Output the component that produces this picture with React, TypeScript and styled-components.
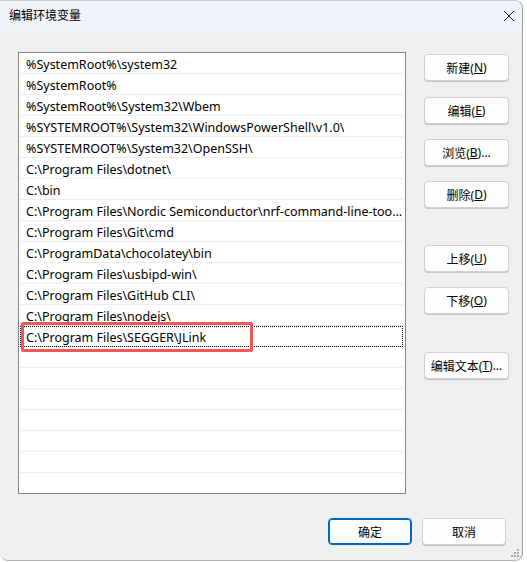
import React from "react";
import styled, { createGlobalStyle } from "styled-components";

const GlobalStyle = createGlobalStyle`
  html, body {
    margin: 0;
    padding: 0;
    background: #ffffff;
  }
  * {
    box-sizing: border-box;
  }
`;

const FONT = `"Noto Sans", "Noto Sans CJK SC", sans-serif`;

const Window = styled.div`
  position: relative;
  width: 523px;
  height: 561px;
  display: flex;
  flex-direction: column;
  background: #efefef;
  border-right: 1px solid #9c9c9c;
  border-bottom: 1px solid #b4b4b4;
  border-top: 1px solid #c8c8c8;
  border-radius: 0 8px 8px 8px;
  overflow: hidden;
  font-family: ${FONT};
  font-size: 12px;
  color: #000;
`;

const TitleBar = styled.div`
  height: 30px;
  flex: none;
  display: flex;
  align-items: center;
  justify-content: space-between;
  padding: 0 1px 0 9px;
  background: #eef2f9;
`;

const Title = styled.span`
  font-size: 12px;
  line-height: 1;
`;

const CloseButton = styled.div`
  width: 24px;
  height: 24px;
  display: flex;
  align-items: center;
  justify-content: center;
`;

const Body = styled.div`
  flex: 1;
  display: flex;
  flex-direction: column;
  padding: 21px 13px 15px 18px;
`;

const Main = styled.div`
  display: flex;
  gap: 18px;
`;

const ListBox = styled.div`
  position: relative;
  width: 390px;
  height: 442px;
  background: #ffffff;
  border: 1px solid #868686;
  padding: 0 2px 0 1px;
  overflow: hidden;
`;

const Row = styled.div<{ $focused?: boolean }>`
  height: 21px;
  display: flex;
  align-items: center;
  padding: 2px 0 0 6px;
  border-bottom: 1px solid #ededed;
  white-space: nowrap;
  overflow: hidden;
  font-size: 12.5px;
  line-height: 19px;
  outline: ${(p) => (p.$focused ? "1px dotted #000" : "none")};
  outline-offset: -1px;
`;

const RowText = styled.span`
  overflow: hidden;
  text-overflow: ellipsis;
`;

const Highlight = styled.div`
  position: absolute;
  left: 2px;
  top: 269px;
  width: 232px;
  height: 30px;
  border: 3px solid #f25757;
  border-radius: 2px;
  pointer-events: none;
`;

const SideButtons = styled.div`
  display: flex;
  flex-direction: column;
  padding-top: 2px;
`;

const Button = styled.button<{ $gap?: number; $default?: boolean; $width?: number }>`
  width: ${(p) => p.$width ?? 85}px;
  height: 27px;
  margin-top: ${(p) => p.$gap ?? 0}px;
  padding: 0;
  background: #fdfdfd;
  border: 1px solid ${(p) => (p.$default ? "#0067c0" : "#d0d0d0")};
  box-shadow: ${(p) => (p.$default ? "inset 0 0 0 1px #0067c0" : "0 1px 0 #c4c4c4")};
  border-radius: 4px;
  font-family: ${FONT};
  font-size: 12px;
  color: #000;
  display: flex;
  align-items: center;
  justify-content: center;
  cursor: default;
`;

const Footer = styled.div`
  margin-top: auto;
  display: flex;
  justify-content: flex-end;
  gap: 10px;
  padding-right: 3px;
`;

const Grip = styled.svg`
  position: absolute;
  right: 2px;
  bottom: 2px;
`;

const paths = [
  "%SystemRoot%\\system32",
  "%SystemRoot%",
  "%SystemRoot%\\System32\\Wbem",
  "%SYSTEMROOT%\\System32\\WindowsPowerShell\\v1.0\\",
  "%SYSTEMROOT%\\System32\\OpenSSH\\",
  "C:\\Program Files\\dotnet\\",
  "C:\\bin",
  "C:\\Program Files\\Nordic Semiconductor\\nrf-command-line-tools\\bin\\",
  "C:\\Program Files\\Git\\cmd",
  "C:\\ProgramData\\chocolatey\\bin",
  "C:\\Program Files\\usbipd-win\\",
  "C:\\Program Files\\GitHub CLI\\",
  "C:\\Program Files\\nodejs\\",
  "C:\\Program Files\\SEGGER\\JLink",
];

const TOTAL_ROWS = 21;

const sideButtons = [
  { label: "新建", key: "N", gap: 0 },
  { label: "编辑", key: "E", gap: 16 },
  { label: "浏览", key: "B", gap: 15, more: true },
  { label: "删除", key: "D", gap: 15 },
  { label: "上移", key: "U", gap: 37 },
  { label: "下移", key: "O", gap: 15 },
  { label: "编辑文本", key: "T", gap: 38, more: true },
];

const App = () => {
  const rows = Array.from({ length: TOTAL_ROWS }, (_, i) => paths[i] ?? "");

  return (
    <>
      <GlobalStyle />
      <Window>
        <TitleBar>
          <Title>编辑环境变量</Title>
          <CloseButton>
            <svg width="12" height="12" viewBox="0 0 12 12">
              <path d="M1 1 L11 11 M11 1 L1 11" stroke="#1a1a1a" strokeWidth="1" />
            </svg>
          </CloseButton>
        </TitleBar>
        <Body>
          <Main>
            <ListBox>
              {rows.map((p, i) => (
                <Row key={i} $focused={i === paths.length - 1}>
                  <RowText>{p}</RowText>
                </Row>
              ))}
              <Highlight />
            </ListBox>
            <SideButtons>
              {sideButtons.map((b) => (
                <Button key={b.key} $gap={b.gap}>
                  {b.label}(<u>{b.key}</u>){b.more ? "..." : ""}
                </Button>
              ))}
            </SideButtons>
          </Main>
          <Footer>
            <Button $default $width={84}>确定</Button>
            <Button $width={84}>取消</Button>
          </Footer>
        </Body>
        <Grip width="10" height="10" viewBox="0 0 10 10">
          {[
            [8, 2],
            [5, 5],
            [8, 5],
            [2, 8],
            [5, 8],
            [8, 8],
          ].map(([x, y]) => (
            <rect key={`${x}-${y}`} x={x - 1} y={y - 1} width="2" height="2" fill="#a8a8a8" />
          ))}
        </Grip>
      </Window>
    </>
  );
};

export default App;
